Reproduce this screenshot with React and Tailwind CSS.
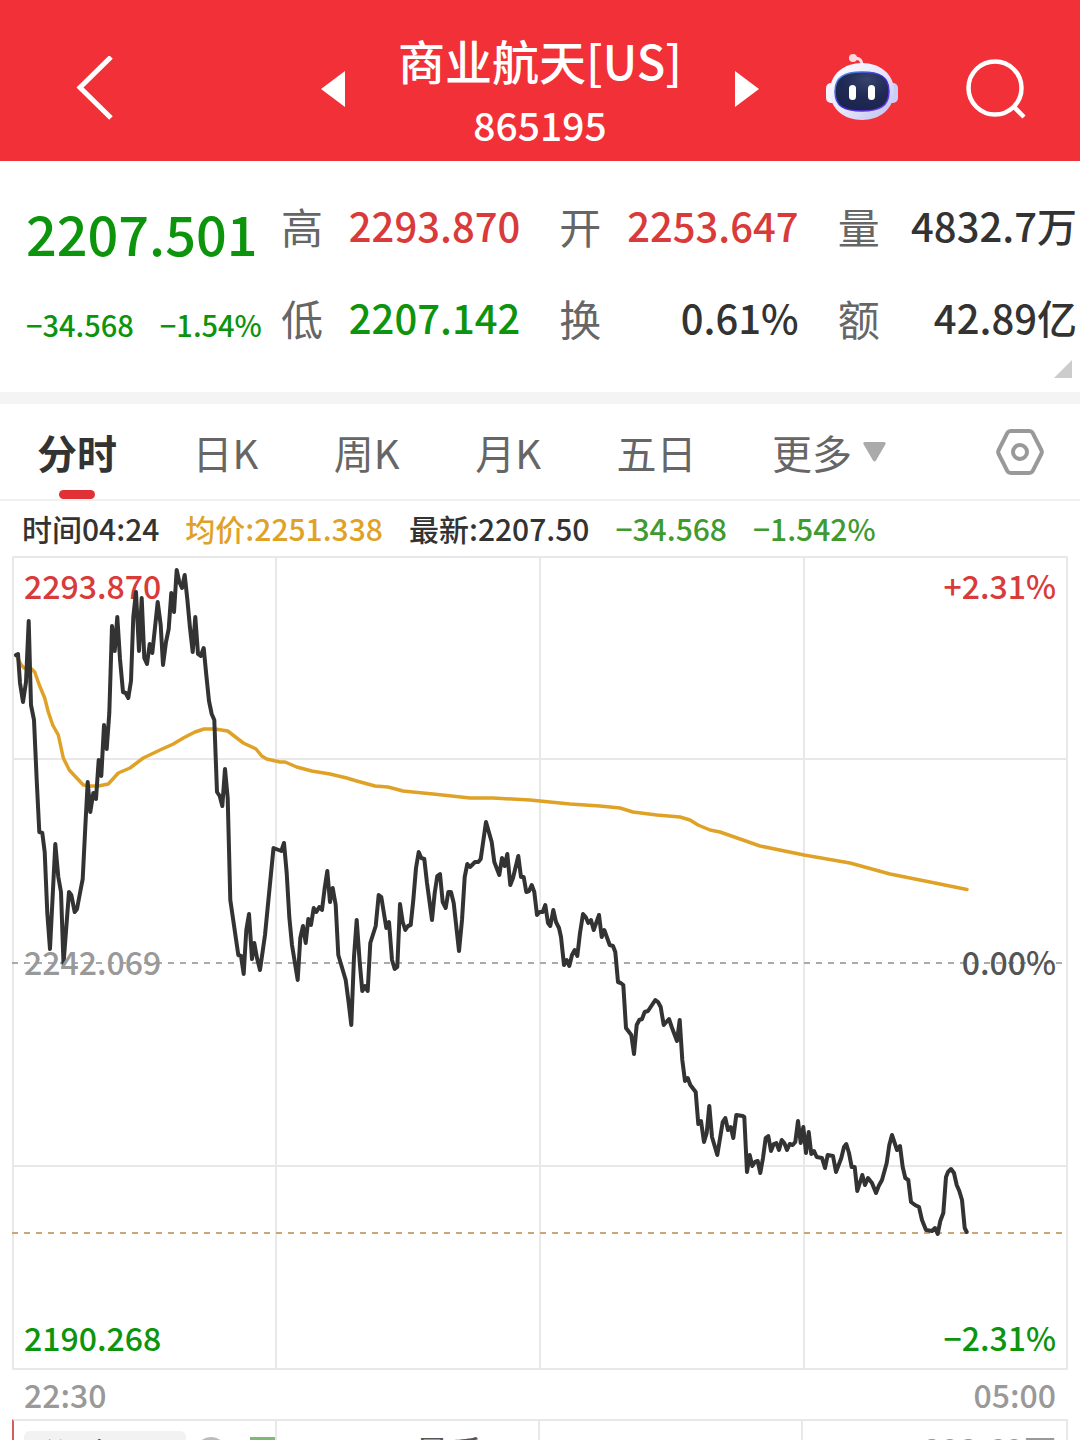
import React from 'react';
import clsx from 'clsx';

const stats = [
  { label: '高', value: '2293.870', color: 'text-[#d93a3a]' },
  { label: '开', value: '2253.647', color: 'text-[#d93a3a]' },
  { label: '量', value: '4832.7万', color: 'text-[#333333]' },
  { label: '低', value: '2207.142', color: 'text-[#0d940d]' },
  { label: '换', value: '0.61%', color: 'text-[#333333]' },
  { label: '额', value: '42.89亿', color: 'text-[#333333]' },
];

const tabs = ['分时', '日K', '周K', '月K', '五日'];

const pricePoints = `
  16,655 18,654 20,683 23,702 26,682 28.7,621 31,705 34,720 36.7,780 39.3,832 42.3,833 44.7,852 47.3,913 50,949
  55.3,844 58.3,877 61,892 63.5,964 66.3,927 69,892 71.3,895 74.7,912 77,909 80,893 82.7,879 85.3,827 87.7,782
  90.3,812 93.3,793 96,799 98.7,760 101.3,776 104,725 106.7,749 109.3,713 112,626 114.7,651 117.3,617 120,659
  123,692 125.7,693 128.3,698 131,681 133.3,617 136,592 139,651 141.7,598 144.3,658 147,664 149.7,644 152.3,653
  157.7,602 160.7,625 163,665 166,642 168.7,629 171.3,593 174,612 176.7,570 179.3,582 182,588 184.7,575 187.3,599
  190,628 192.7,652 195.3,617 198,654 200.7,656 203.7,648 206.3,675 209,701 211.7,714 214.3,720 217,792 219.7,796
  222.3,806 225,769 227.7,798 230.3,900 238.3,955 241,956 243.7,974 246.3,930 249,914 252,959 254.3,943 257,958
  260,970 265,935 273.5,848 281.3,851 284,843 286.7,873 289.3,917 292,945 297.7,980 300.3,938 303,926 305.7,943
  308.3,919 311,925 313.7,908 316.3,912 319.3,907 322,910 324.7,888 327.3,871 330,902 332.7,888 335.7,905 338.3,955
  345.7,980 348.7,1003 351.3,1025 354,957 356.7,920 359.7,962 362.3,991 365,986 367.7,991 370.3,943 375.7,926
  378.7,895 381.3,897 386.3,928 389,922 392,960 394.7,969 397.3,967 400,904 402.7,922 405.3,930 408,926 410.7,925
  413.3,900 416,868 418.7,852 421.3,858 424.3,859 427,883 432,920 434.7,893 437.3,876 440,874 442.7,902 445.7,908
  448.3,892 451,892 453.7,903 459,951 462,920 464.7,877 467.3,864 470,867 475,862 478.3,862 480.7,859 486,822
  491.7,842 494.3,862 499.3,875 502,858 504.7,866 507.3,854 510.3,885 513,878 518.3,856 521,877 523.7,877 526.3,892
  529,891 531.7,885 534.3,892 537,915 539.7,912 542.7,912 545.3,905 548,923 550.3,926 553.3,910 556,922 559,928
  561,937 564,965 566.7,960 569.3,966 572,955 574.7,950 577.3,956 580,933 583,914 585.7,917 588.3,923 591,920
  593.7,930 599,915 601.7,937 604.3,930 609.7,945 613,946 615.3,952 618,982 620.7,983 623.3,985 626,1028 631.3,1035
  634,1054 636.7,1025 639.3,1020 642,1019 644.7,1012 648,1011 655.3,1000 658,1002 660.7,1007 663.7,1025 669,1019
  671.7,1027 677,1041 679.7,1020 682.3,1060 685,1081 687.7,1078 690.3,1085 695.7,1092 698.3,1124 701,1121 704,1142
  706.7,1133 709.3,1106 712,1137 717.3,1155 722.7,1122 725.3,1118 728,1130 730.7,1127 733.3,1138 736.3,1115
  742.7,1116 744.3,1117 747,1172 749.7,1155 752.3,1166 755,1162 757.7,1161 760.3,1173 763,1158 765.7,1138 768.3,1136
  771,1151 773.7,1144 776.3,1143 779,1150 781.7,1140 784.3,1143 787,1150 789.7,1144 792.7,1145 795.3,1142 798,1121
  800.7,1143 803.3,1127 806,1153 808.7,1132 811.3,1154 814,1151 816.7,1157 822,1158 825,1168 827.7,1155 833,1156
  836,1172 841.3,1158 844,1147 846.3,1144 849,1153 851.7,1167 854.7,1167 857.3,1191 862.3,1175 865,1185 868,1178
  872,1183 876,1193 878.7,1186 882,1180 886.7,1163 889.3,1145 892,1135 897,1150 900,1146 902.7,1167 905.3,1178
  908.3,1180 911,1202 915,1205 919,1207 922,1220 926,1230 932,1231 935,1228 937.7,1234 940.3,1221 943.3,1213
  946,1177 948,1172 951,1169 954,1173 956.7,1185 959.3,1191 962,1200 964.7,1228 966.7,1232
`;

const averagePoints = `
  16,655 20.7,664 24,668 31.7,669 34.7,672 39.3,685 44.7,698 48.3,712 52.7,725 58.3,735 63.3,758 69.3,770 76.7,778
  83.3,785 90,786 98.3,786 108.3,784 118.3,773 130,768 143.3,758 160,750 173.3,744 183.3,738 195,732 204,729 215,729
  227.7,731 243.3,743 256,749 261.7,756 266.7,759 280,762 285,762 296.7,767 311.7,771 330,774 346.7,778 356.7,781
  375,786 388,787 403,791 433,794 470,798 493,798 530,800 540,801 570,804 600,806 620,808 633,812 656.7,815 680,817
  690,820 698,825 710,830 720,832 760,846 804,855 850,863 890,874 930,882 967,889.5
`;

const RobotIcon = () => (
  <svg viewBox="825 52 72 70" className="w-[72px] h-[70px]" fill="none">
    <defs>
      <linearGradient id="shell" x1="0" y1="0" x2="1" y2="1">
        <stop offset="0" stopColor="#ffffff" />
        <stop offset="0.55" stopColor="#e6e4fb" />
        <stop offset="1" stopColor="#b9bdf0" />
      </linearGradient>
      <linearGradient id="rim" x1="0" y1="0" x2="1" y2="1">
        <stop offset="0" stopColor="#4fa3ee" />
        <stop offset="0.5" stopColor="#3a2ad0" />
        <stop offset="1" stopColor="#7c3ae8" />
      </linearGradient>
      <radialGradient id="visor" cx="0.6" cy="0.2" r="0.9">
        <stop offset="0" stopColor="#37436a" />
        <stop offset="0.5" stopColor="#1f2a55" />
        <stop offset="1" stopColor="#1a2249" />
      </radialGradient>
    </defs>
    <path d="M853 57C858 55 861 58 861 64" stroke="#f8dde8" strokeWidth="3" />
    <circle cx="852" cy="56" r="4" fill="#fbd9e2" />
    <rect x="825" y="81" width="12" height="20" rx="5" fill="#f4f2ff" />
    <rect x="885" y="81" width="12" height="20" rx="5" fill="#c9cdf8" />
    <path
      d="M861 61C879 61 893 72 893 89C893 107 879 118 861 118C843 118 829 107 829 89C829 72 843 61 861 61Z"
      fill="url(#shell)"
    />
    <path
      d="M861 70C879 70 888 75 888 89.500C888 104 879 109 861 109C843 109 834 104 834 89.500C834 75 843 70 861 70Z"
      fill="url(#visor)"
      stroke="url(#rim)"
      strokeWidth="1.500"
    />
    <rect x="848" y="83" width="7" height="15" rx="3.500" fill="white" />
    <rect x="867" y="83" width="7" height="15" rx="3.500" fill="white" />
  </svg>
);

const Header = () => (
  <header className="grid grid-cols-[1fr_auto_1fr] items-center gap-x-[53px] h-[161px] shrink-0 pt-4 bg-[#f13037] text-white">
    <div className="flex items-center justify-between pl-[76px]">
      <button type="button" aria-label="返回">
        <svg viewBox="0 0 38 66" className="w-[38px] h-[66px]" fill="none" stroke="currentColor" strokeWidth="5">
          <path d="M35 1L4 31.500L35 62" />
        </svg>
      </button>
      <button type="button" aria-label="上一个">
        <svg viewBox="0 0 24 36" className="w-6 h-9" fill="currentColor">
          <path d="M24 0V36L0 18Z" />
        </svg>
      </button>
    </div>
    <div className="pt-1.5 text-center">
      <h1 className="text-[47px] leading-[64px] font-medium">商业航天[US]</h1>
      <p className="text-[39px] leading-[64px] font-medium">865195</p>
    </div>
    <div className="flex items-center justify-between pr-[54px]">
      <button type="button" aria-label="下一个">
        <svg viewBox="0 0 24 36" className="w-6 h-9" fill="currentColor">
          <path d="M0 0V36L24 18Z" />
        </svg>
      </button>
      <button type="button" aria-label="智能助手">
        <RobotIcon />
      </button>
      <button type="button" aria-label="搜索">
        <svg viewBox="0 0 60 60" className="w-[60px] h-[60px]" fill="none" stroke="currentColor" strokeWidth="4.500">
          <circle cx="29" cy="29" r="26.500" />
          <path d="M47.500 47.500L58 58" />
        </svg>
      </button>
    </div>
  </header>
);

const Quote = () => (
  <section className="flex h-[231px] shrink-0 pt-[18px] pl-[26px] pr-[3px]">
    <div className="w-[255px] shrink-0 text-[#0d940d] font-medium whitespace-nowrap">
      <p className="text-[54px] leading-[108px]">2207.501</p>
      <p className="flex gap-[26px] text-[29px] leading-[74px]">
        <span>−34.568</span>
        <span>−1.54%</span>
      </p>
    </div>
    <div className="relative flex-1">
      <dl className="grid grid-cols-3 gap-x-[39px] whitespace-nowrap">
        {stats.map((item) => (
          <div key={item.label} className="flex items-center justify-between h-[92px]">
            <dt className="text-[42px] text-[#666666]">{item.label}</dt>
            <dd className={clsx('text-[40px] font-medium', item.color)}>{item.value}</dd>
          </div>
        ))}
      </dl>
      {/* expand corner */}
      <svg viewBox="0 0 18 18" className="absolute right-[5px] top-[181px] w-[18px] h-[18px]" fill="#cccccc">
        <path d="M18 0V18H0Z" />
      </svg>
    </div>
  </section>
);

const PeriodTabs = () => (
  <div className="flex items-center h-[97px] shrink-0 pl-[37px] pr-9 border-b-2 border-[#f0f0f0] text-[40px] text-[#666666]">
    <nav className="flex flex-1 items-center justify-between h-full mr-[110px]">
      {tabs.map((tab, index) => (
        <button
          type="button"
          key={tab}
          className={clsx('relative h-full', index === 0 && 'font-bold text-[#333333]')}
        >
          {tab}
          {index === 0 && (
            <span className="absolute bottom-0 left-1/2 -translate-x-1/2 w-9 h-[9px] rounded-full bg-[#e03236]" />
          )}
        </button>
      ))}
      <button type="button" className="flex items-center gap-[11px] h-full">
        更多
        <svg viewBox="0 0 23 20" className="w-[23px] h-5" fill="#aaaaaa">
          <path d="M2 0H21Q23.500 0 22.300 2.500L13 18.500Q11.500 20.500 10 18.500L0.700 2.500Q-0.500 0 2 0Z" />
        </svg>
      </button>
    </nav>
    <button type="button" aria-label="设置">
      <svg viewBox="0 0 48 48" className="w-12 h-12" fill="none" stroke="#999999" strokeWidth="4">
        <path
          d="M14.500 3H33.500Q35.500 3 36.500 4.700L45.300 22Q46.300 24 45.300 26L36.500 43.300Q35.500 45 33.500 45H14.500Q12.500 45 11.500 43.300L2.700 26Q1.700 24 2.700 22L11.500 4.700Q12.500 3 14.500 3Z"
          strokeLinejoin="round"
        />
        <circle cx="24" cy="24" r="7" />
      </svg>
    </button>
  </div>
);

const PriceChart = () => (
  <section className="shrink-0 px-3">
    <div className="grid">
      <div className="[grid-area:1/1] flex flex-col justify-between pt-0.5 pb-1.5 px-3 text-[32px] leading-[54px] font-medium">
        <div className="flex justify-between text-[#d93a3a]">
          <span>2293.870</span>
          <span>+2.31%</span>
        </div>
        {/* the base price stays readable above the line */}
        <div className="flex justify-between z-10 text-[#555555]">
          <span className="text-[#999999]">2242.069</span>
          <span>0.00%</span>
        </div>
        <div className="flex justify-between text-[#0d940d]">
          <span>2190.268</span>
          <span>−2.31%</span>
        </div>
      </div>
      <svg viewBox="12 556 1056 814" className="[grid-area:1/1] w-full h-auto" fill="none">
        <path
          d="M13 557H1067V1369H13ZM276 557V1369M540 557V1369M804 557V1369M13 759H1067M13 1166H1067"
          stroke="#e8e8e8"
          strokeWidth="2"
        />
        <path d="M12 963H1067" stroke="#aaaaaa" strokeWidth="2" strokeDasharray="6 6" />
        <path d="M12 1233H1067" stroke="#c8a878" strokeWidth="2" strokeDasharray="6 6" />
        <polyline points={averagePoints} stroke="#dfa227" strokeWidth="3.500" strokeLinejoin="round" strokeLinecap="round" />
        <polyline points={pricePoints} stroke="#333333" strokeWidth="4" strokeLinejoin="round" strokeLinecap="round" />
      </svg>
    </div>
    <div className="flex justify-between px-3 text-[32px] leading-[49px] font-medium text-[#999999]">
      <span>22:30</span>
      <span>05:00</span>
    </div>
  </section>
);

const VolumePane = () => (
  <section className="flex-1 min-h-0 overflow-hidden px-3">
    <div className="grid grid-cols-4 h-[200px] border-2 border-[#e8e8e8] border-l-[#d06060] divide-x-2 divide-[#e8e8e8]">
      <div className="flex items-start gap-[9px] pl-2.5 pt-2.5">
        <button type="button" className="flex items-center h-11 w-[162px] pl-3.5 rounded-md bg-[#f2f2f2] text-[34px] text-[#333333]">
          分时量
        </button>
        <span className="w-8 h-8 mt-1.5 rounded-full border-4 border-[#bbbbbb]" />
        <span className="w-[25px] h-40 mt-1.5 ml-auto bg-[#7fb877]" />
      </div>
      <div className="pl-[138px] text-[34px] leading-[62px] text-[#555555]">量手</div>
      <div />
      <div className="pr-2.5 text-right text-[32px] leading-[56px] font-medium text-[#999999]">393.69万</div>
    </div>
  </section>
);

const App = () => {
  return (
    <main className="flex flex-col h-screen overflow-hidden bg-white font-['Noto_Sans_CJK_SC',sans-serif]">
      <Header />
      <Quote />
      <div className="h-3 shrink-0 bg-[#f4f4f4]" />
      <PeriodTabs />
      <div className="flex items-center gap-[26px] h-[55px] shrink-0 px-[22px] text-[30px] font-medium whitespace-nowrap text-[#333333]">
        <span>时间04:24</span>
        <span className="text-[#dfa227]">均价:2251.338</span>
        <span>最新:2207.50</span>
        <span className="text-[#3f9a2f]">−34.568</span>
        <span className="text-[#3f9a2f]">−1.542%</span>
      </div>
      <PriceChart />
      <VolumePane />
    </main>
  );
};

export default App;
